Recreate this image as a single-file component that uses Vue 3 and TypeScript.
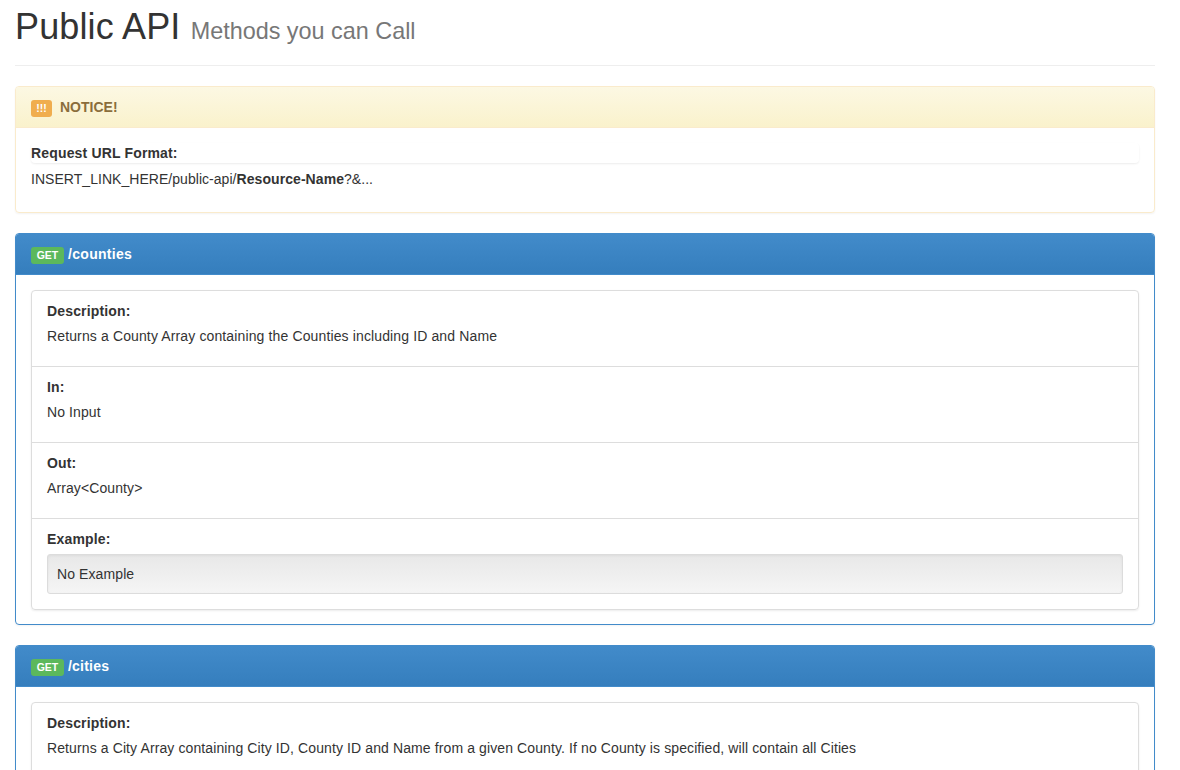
<script setup lang="ts">
interface Section { title: string; body: string; kind: string }
interface Method { path: string; key: string; sections: Section[]; example: string }

const methods: Method[] = [
  {
    path: '/counties',
    key: 'counties',
    sections: [
      { title: 'Description:', kind: 'long', body: 'Returns a County Array containing the Counties including ID and Name' },
      { title: 'In:', kind: 'short', body: 'No Input' },
      { title: 'Out:', kind: 'short', body: 'Array<County>' },
    ],
    example: 'No Example',
  },
  {
    path: '/cities',
    key: 'cities',
    sections: [
      { title: 'Description:', kind: 'wide', body: 'Returns a City Array containing City ID, County ID and Name from a given County. If no County is specified, will contain all Cities' },
    ],
    example: 'No Example',
  },
]
</script>

<template>
  <main class="page">
    <header class="page-header">
      <h1>Public API <small>Methods you can Call</small></h1>
    </header>

    <section class="panel warning">
      <h3 class="heading"><span class="label orange">!!!</span><span class="name">NOTICE!</span></h3>
      <div class="body">
        <div class="legend"><strong>Request URL Format:</strong></div>
        <p>INSERT_LINK_HERE/public-api/<strong>Resource-Name</strong>?&amp;...</p>
      </div>
    </section>

    <section v-for="m in methods" :key="m.key" class="panel primary">
      <h3 class="heading"><span class="label green">GET</span><span class="name" :class="m.key">{{ m.path }}</span></h3>
      <div class="body">
        <ul class="list">
          <li v-for="s in m.sections" :key="s.title">
            <strong>{{ s.title }}</strong>
            <p :class="s.kind">{{ s.body }}</p>
          </li>
          <li v-if="m.key === 'counties'" class="example">
            <strong>Example:</strong>
            <div class="well">{{ m.example }}</div>
          </li>
        </ul>
      </div>
    </section>
  </main>
</template>

<style>
body { margin: 0; background: #fff; overflow: hidden; }
</style>

<style scoped>
* { box-sizing: border-box; }
.page {
  width: 1180px;
  height: 770px;
  overflow: hidden;
  padding: 0 25px 0 15px;
  font: 14px/20px "Liberation Sans", Arial, sans-serif;
  color: #333;
}
.page-header { height: 66px; margin-bottom: 20px; border-bottom: 1px solid #eee; padding-top: 7px; }
h1 { margin: 0; font-size: 36px; line-height: 40px; font-weight: 400; letter-spacing: .14px; }
small { font-size: 23.4px; line-height: 1; color: #777; letter-spacing: 0; }
strong { letter-spacing: .16px; }
.panel { border: 1px solid; border-radius: 4px; margin-bottom: 20px; box-shadow: 0 1px 2px rgba(0, 0, 0, .05); }
.heading { display: flex; margin: 0; height: 41px; padding: 10px 15px; font-size: 14px; line-height: 20px; font-weight: 700; border-bottom: 1px solid; border-radius: 3px 3px 0 0; }
.warning { border-color: #faebcc; }
.warning .heading { color: #8a6d3b; border-color: #faebcc; background: linear-gradient(#fcf8e3, #faf2cc); }
.warning .name { margin-left: 8px; }
.warning p { margin-bottom: 8px; letter-spacing: .04px; }
.warning p strong { letter-spacing: .07px; }
.primary { border-color: #428bca; }
.primary .heading { color: #fff; border-color: #428bca; background: linear-gradient(#428bca, #357ebd); }
.primary .name { margin-left: 4px; }
.primary .body { padding-bottom: 14px; }
.counties { letter-spacing: .3px; }
.cities { letter-spacing: .22px; }
.body { padding: 15px; }
.label { height: 17px; margin-top: 3px; font-size: 10.5px; line-height: 17px; text-align: center; color: #fff; border-radius: 3px; }
.orange { width: 21px; background: #f0ad4e; }
.green { width: 33px; background: #5cb85c; }
.legend { height: 20px; margin-bottom: 6px; border-radius: 4px; box-shadow: 0 1px 2px rgba(0, 0, 0, .075); }
p { margin: 0 0 18px; }
.list { list-style: none; margin: 0; padding: 0; border: 1px solid #ddd; border-radius: 4px; box-shadow: 0 1px 2px rgba(0, 0, 0, .075); }
.list li { height: 76px; padding: 10px 15px; border-bottom: 1px solid #ddd; }
.list p { margin-top: 5px; }
.long { letter-spacing: .13px; }
.wide { letter-spacing: .108px; }
.short { letter-spacing: .1px; }
.list .example { height: 90px; border-bottom: 0; }
.well { height: 40px; margin-top: 5px; padding: 9px; letter-spacing: .1px; border: 1px solid #dcdcdc; border-radius: 3px; background: linear-gradient(#e8e8e8, #f5f5f5); box-shadow: inset 0 1px 3px rgba(0, 0, 0, .05), 0 1px 0 rgba(255, 255, 255, .1); }
</style>
